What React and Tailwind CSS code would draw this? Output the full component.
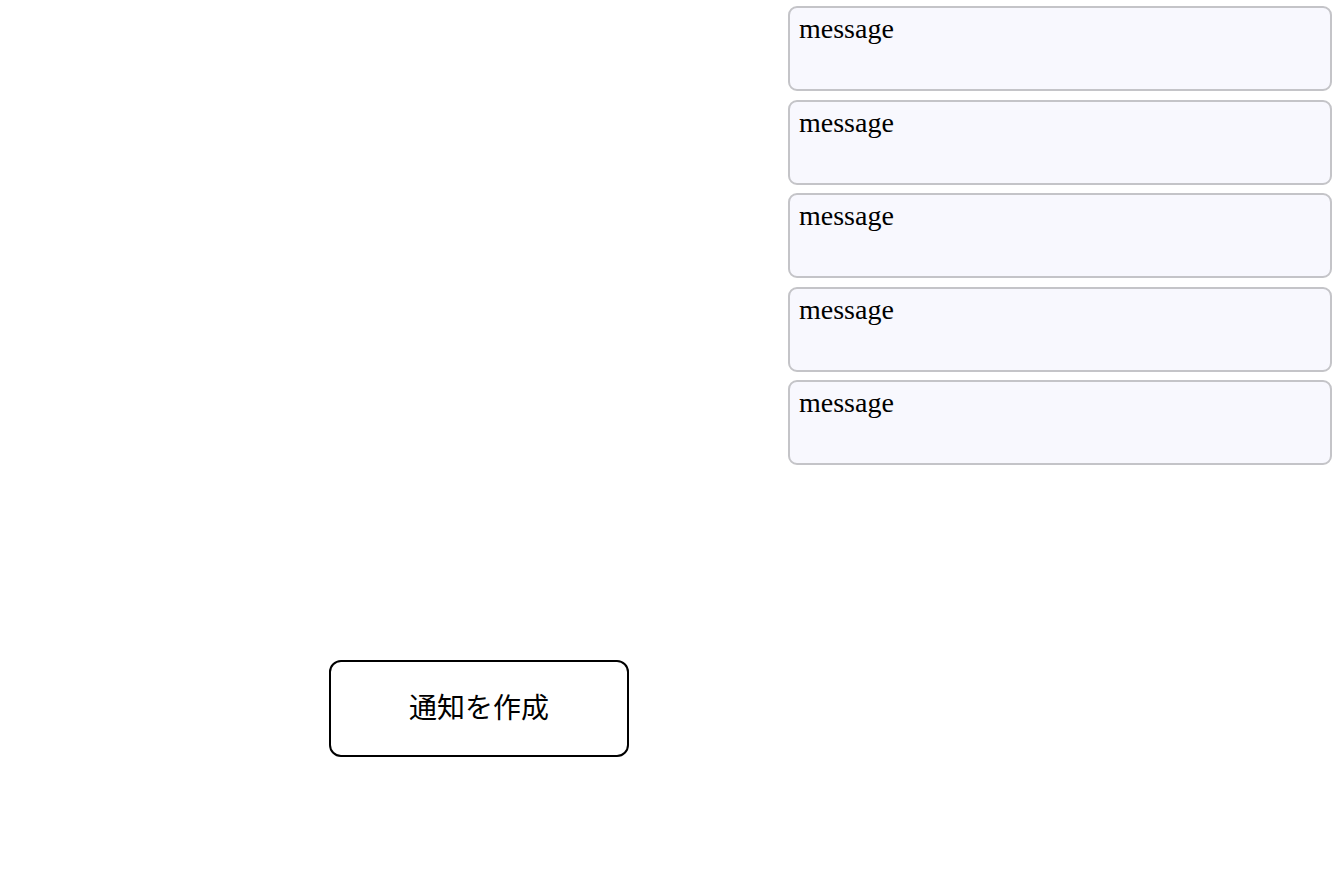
export default function App() {
  const msgs = [0, 1, 2, 3, 4];
  return (
    <div className="relative w-[1338px] h-[870px] bg-white overflow-hidden">
      <div className="flex w-[958px] justify-center pt-[660px]">
        <button className="w-[300px] h-[97px] border-2 border-black rounded-[12px] bg-white text-black text-[28px] flex items-center justify-center" style={{ fontFamily: '"Liberation Serif", "Noto Sans CJK JP", serif' }}>
          通知を作成
        </button>
      </div>
      <div className="absolute top-[6px] right-[6px] w-[544px] flex flex-col gap-[8.5px]">
        {msgs.map((i) => (
          <div key={i} className="h-[85px] border-2 border-[#c4c4c8] rounded-[9px] bg-[#f8f8fe] px-[9px] pt-[5px] text-black text-[28px] leading-[32px]" style={{ fontFamily: '"Liberation Serif", serif' }}>
            message
          </div>
        ))}
      </div>
    </div>
  );
}
